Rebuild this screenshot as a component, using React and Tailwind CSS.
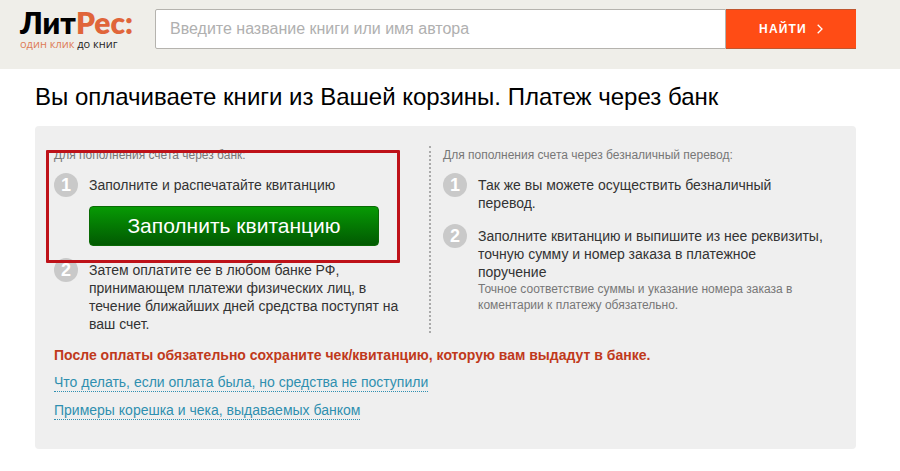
import React from "react";

const Step = ({ number, children }) => (
  <li className="flex items-start gap-[11px]">
    <span className="flex h-6 w-6 shrink-0 items-center justify-center rounded-full bg-[#c9c9c9] text-[18px] leading-6 font-bold text-white">
      {number}
    </span>
    <div className="min-w-0 flex-1 pt-[3px] text-sm leading-[18px] text-[#333]">
      {children}
    </div>
  </li>
);

const App = () => {
  const links = [
    "Что делать, если оплата была, но средства не поступили",
    "Примеры корешка и чека, выдаваемых банком",
  ];

  return (
    <div className="min-h-screen bg-white font-['Liberation_Sans',Arial,sans-serif]">
      {/* Header */}
      <header className="flex items-start bg-[#efeee9] pt-[9px] pr-11 pb-4 pl-5">
        <a
          href="#"
          className="w-[135px] shrink-0"
        >
          <span className="block font-['Lato','Roboto',sans-serif] text-[30px] leading-[26px] font-extrabold text-black">
            Лит<span className="text-[#e0653a]">Рес:</span>
          </span>
          <span className="block font-['Open_Sans',sans-serif] text-[11px] leading-[18px] font-medium text-[#222]">
            <span className="text-[#dd7a55]">один клик</span> до книг
          </span>
        </a>

        <form
          className="flex h-10 flex-1"
          onSubmit={(e) => e.preventDefault()}
        >
          <input
            type="text"
            aria-label="Поиск"
            placeholder="Введите название книги или имя автора"
            className="min-w-0 flex-1 rounded-l-[2px] border border-[#b5b3ae] bg-white px-[14px] text-base text-[#333] outline-none placeholder:text-[#b0b0b0]"
          />
          <button
            type="submit"
            className="flex w-[130px] items-center justify-center gap-[10px] border-y border-[#c0562f] bg-[#ff4c15] text-xs font-bold tracking-widest text-white"
          >
            НАЙТИ
            <svg
              width="6"
              height="10"
              viewBox="0 0 6 10"
              fill="none"
              stroke="currentColor"
              strokeWidth="1.3"
            >
              <path d="M0.7 0.7 5 5 0.7 9.3" />
            </svg>
          </button>
        </form>
      </header>

      <main className="pr-11 pl-[35px]">
        <h1 className="pt-[14px] pb-[15px] text-2xl leading-7 text-black">
          Вы оплачиваете книги из Вашей корзины. Платеж через банк
        </h1>

        {/* Payment panel */}
        <section className="rounded-[4px] bg-[#efefef] px-[19px] pt-5 pb-[29px]">
          <div className="flex">
            {/* Bank */}
            <div className="relative w-[377px] shrink-0 border-r-2 border-dotted border-[#aaa] pr-5">
              <p className="text-xs leading-[18px] text-[#777]">
                Для пополнения счета через банк:
              </p>
              <ol className="mt-[9px] flex flex-col gap-3">
                <Step number="1">
                  <p>Заполните и распечатайте квитанцию</p>
                  <button className="mt-3 flex h-10 w-[290px] items-center justify-center rounded-[4px] border border-[#0a6a05] bg-linear-to-b from-[#079a04] to-[#025a02] text-[21px] text-white">
                    Заполнить квитанцию
                  </button>
                </Step>
                <Step number="2">
                  Затем оплатите ее в любом банке РФ, принимающем платежи
                  физических лиц, в течение ближайших дней средства поступят на
                  ваш счет.
                </Step>
              </ol>
              <div className="pointer-events-none absolute top-1 -left-2 h-[113px] w-[354px] rounded-[1px] border-[3px] border-[#be1219]" />
            </div>

            {/* Bank transfer */}
            <div className="min-w-0 flex-1 pr-3 pl-3">
              <p className="text-xs leading-[18px] text-[#777]">
                Для пополнения счета через безналичный перевод:
              </p>
              <ol className="mt-[9px] flex flex-col gap-3">
                <Step number="1">
                  Так же вы можете осуществить безналичный перевод.
                </Step>
                <Step number="2">
                  <p>
                    Заполните квитанцию и выпишите из нее реквизиты, точную
                    сумму и номер заказа в платежное поручение
                  </p>
                  <p className="text-xs leading-4 text-[#777]">
                    Точное соответствие суммы и указание номера заказа в
                    коментарии к платежу обязательно.
                  </p>
                </Step>
              </ol>
            </div>
          </div>

          <p className="mt-[13px] text-sm leading-[18px] font-bold text-[#c0391b]">
            После оплаты обязательно сохраните чек/квитанцию, которую вам
            выдадут в банке.
          </p>

          <ul className="mt-[10px] flex flex-col items-start gap-[10px] text-sm">
            {links.map((link) => (
              <li key={link}>
                <a
                  href="#"
                  className="block border-b border-dotted border-[#2f8fb0] leading-[17px] text-[#2f8fb0]"
                >
                  {link}
                </a>
              </li>
            ))}
          </ul>
        </section>
      </main>
    </div>
  );
};

export default App;
